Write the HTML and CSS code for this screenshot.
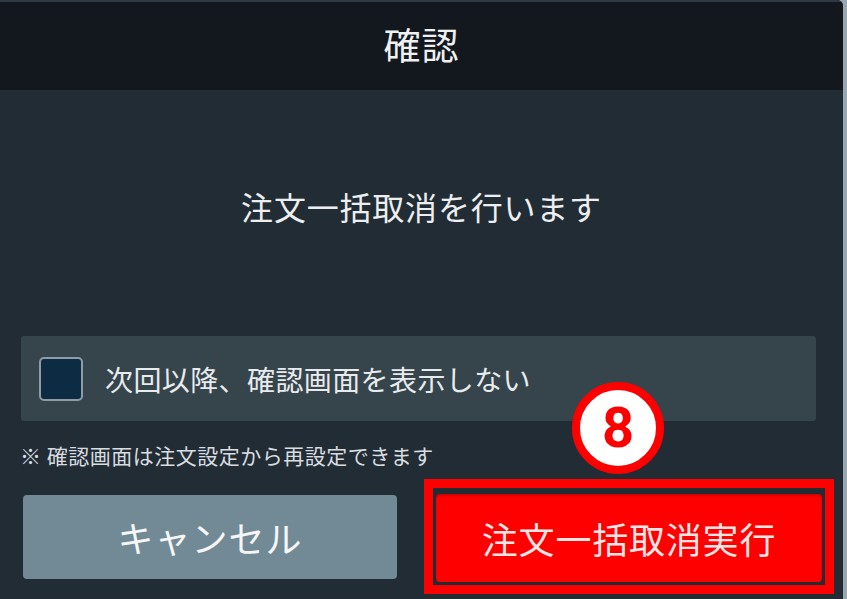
FILE: index.html
```html
<!DOCTYPE html>
<html lang="ja">
<head>
<meta charset="utf-8">
<link rel="stylesheet" href="styles.css">
</head>
<body>
<div class="dialog">
  <div class="header">確認</div>
  <div class="content">
    <p class="message">注文一括取消を行います</p>
    <div class="check-row">
      <span class="checkbox"></span>
      <span class="check-label">次回以降、確認画面を表示しない</span>
    </div>
    <p class="note">※ 確認画面は注文設定から再設定できます</p>
    <div class="buttons">
      <div class="btn btn-cancel">キャンセル</div>
      <div class="btn btn-exec">注文一括取消実行</div>
    </div>
  </div>
  <div class="highlight"></div>
  <div class="badge">8</div>
</div>
</body>
</html>
```

FILE: styles.css
```css
html, body {
  margin: 0;
  padding: 0;
}
body {
  width: 847px;
  height: 599px;
  overflow: hidden;
  background: #9aa7b0;
  font-family: "Noto Sans CJK JP", "Noto Sans", sans-serif;
}
.dialog {
  position: relative;
  width: 843px;
  height: 599px;
  background: #212c35;
  border-top-right-radius: 6px;
  overflow: hidden;
}
.header {
  height: 88px;
  border-top: 2px solid #2e3943;
  background: #13181e;
  color: #eef0f2;
  font-size: 37px;
  line-height: 84px;
  text-align: center;
  letter-spacing: 1px;
}
.content {
  display: flex;
  flex-direction: column;
}
.message {
  margin: 96px 0 0;
  height: 40px;
  line-height: 40px;
  font-size: 32px;
  color: #eceef0;
  text-align: center;
  letter-spacing: 0.8px;
}
.check-row {
  margin: 110px 0 0 21px;
  width: 795px;
  height: 85px;
  box-sizing: border-box;
  padding-left: 18px;
  background: #36444c;
  border-radius: 3px;
  display: flex;
  align-items: center;
}
.checkbox {
  width: 44px;
  height: 44px;
  box-sizing: border-box;
  border: 2px solid #8e9ca6;
  border-radius: 5px;
  background: #0e2b44;
}
.check-label {
  margin-left: 22px;
  font-size: 28px;
  color: #e8ebed;
  letter-spacing: 0.4px;
}
.note {
  margin: 20px 0 0 20px;
  height: 28px;
  line-height: 28px;
  font-size: 21px;
  color: #d9dde0;
  letter-spacing: 0.5px;
}
.buttons {
  margin-top: 26px;
  display: flex;
  align-items: flex-start;
}
.btn {
  display: flex;
  align-items: center;
  justify-content: center;
  color: #f6f6f6;
  font-size: 36px;
  border-radius: 4px;
}
.btn-cancel {
  margin-left: 23px;
  width: 374px;
  height: 84px;
  background: #728a96;
  letter-spacing: 1px;
}
.btn-exec {
  margin-left: 39px;
  margin-top: -1px;
  width: 386px;
  height: 88px;
  background: #ff0000;
  color: #f5e6e6;
  letter-spacing: 0.8px;
  box-shadow: inset 0 2px 2px rgba(120, 0, 0, 0.35);
}
.highlight {
  position: absolute;
  left: 424px;
  top: 479px;
  width: 410px;
  height: 115px;
  box-sizing: border-box;
  border: 9px solid #ff0000;
}
.badge {
  position: absolute;
  left: 572px;
  top: 382px;
  width: 92px;
  height: 92px;
  box-sizing: border-box;
  border: 8px solid #ff0000;
  border-radius: 50%;
  background: #ffffff;
  color: #ff0000;
  font-family: "Roboto", "Liberation Sans", sans-serif;
  font-weight: 700;
  font-size: 56px;
  line-height: 76px;
  text-align: center;
}
```
